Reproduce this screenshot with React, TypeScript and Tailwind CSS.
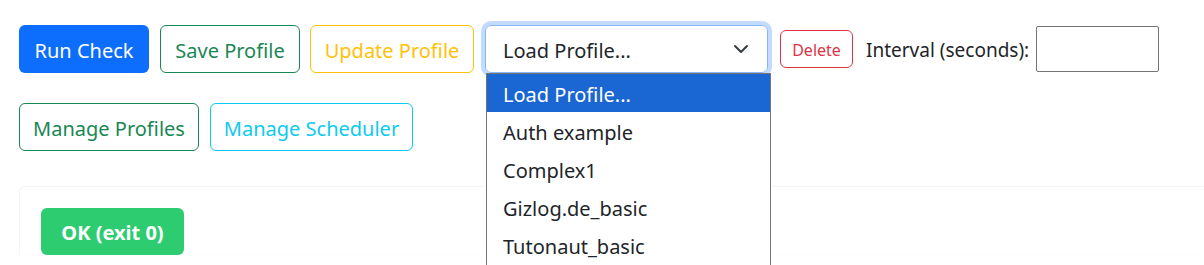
const profiles = ['Load Profile...', 'Auth example', 'Complex1', 'Gizlog.de_basic', 'Tutonaut_basic'];

function Chevron() {
  return (
    <svg width="16" height="16" viewBox="0 0 16 16" fill="none">
      <path d="M2 5l6 6 6-6" stroke="#343a40" strokeWidth="2" strokeLinecap="round" strokeLinejoin="round" />
    </svg>
  );
}

export default function App() {
  return (
    <div className="h-[265px] overflow-hidden bg-white pl-[19px] pt-[25px] text-[20px] text-[#212529]" style={{ fontFamily: '"Noto Sans", "Open Sans", sans-serif' }}>
      {/* top toolbar */}
      <div className="flex items-center">
        <button className="h-[48px] w-[130px] rounded-[6px] bg-[#0d6efd] pt-[3px] text-white">Run Check</button>
        <button className="ml-[11px] h-[48px] w-[140px] rounded-[6px] border border-[#198754] pt-[3px] text-[#198754]">Save Profile</button>
        <button className="ml-[10px] h-[48px] w-[164px] rounded-[6px] border border-[#ffc107] pt-[3px] text-[#ffc107]">Update Profile</button>

        <div className="relative ml-[11px]">
          <div className="flex h-[48px] w-[283px] items-center justify-between rounded-[6px] border border-[#86b7fe] pl-[17px] pr-[18px] shadow-[0_0_0_4px_rgba(13,110,253,0.25)]">
            <span className="pt-[3px]">Load Profile...</span>
            <Chevron />
          </div>
          {/* open native list */}
          <ul className="absolute left-[1px] top-[48px] z-10 w-[285px] border border-[#767676] bg-white pb-[20px]">
            {profiles.map((p, i) => (
              <li
                key={p}
                className={'flex h-[38px] items-center pl-[16px] pt-[4px] ' + (i === 0 ? 'bg-[#1a66d2] text-white' : '')}
              >
                {p}
              </li>
            ))}
          </ul>
        </div>

        <button className="ml-[12px] h-[38px] w-[73px] rounded-[6px] border border-[#dc3545] pt-[2px] text-[16px] text-[#dc3545]">Delete</button>
        <label className="ml-[13px] w-[164px] whitespace-nowrap pt-[3px] text-[19px]">Interval (seconds):</label>
        <input type="text" className="ml-[6px] h-[46px] w-[123px] rounded-[2px] border border-[#767676] px-2" />
      </div>

      <div className="mt-[30px] flex items-center gap-[11px]">
        <button className="h-[48px] w-[180px] rounded-[6px] border border-[#198754] pt-[3px] text-[#198754]">Manage Profiles</button>
        <button className="h-[48px] w-[203px] rounded-[6px] border border-[#0dcaf0] pt-[3px] text-[#0dcaf0]">Manage Scheduler</button>
      </div>

      {/* result card */}
      <div className="mt-[35px] rounded-tl-[6px] border-l border-t border-[#f5f5f5] pl-[21px] pt-[21px] shadow-[0_0_4px_rgba(0,0,0,0.02)]">
        <div className="flex h-[47px] w-[143px] items-center justify-center rounded-[6px] bg-[#2ecc71] pt-[2px] font-bold text-white">OK (exit 0)</div>
      </div>
    </div>
  );
}
